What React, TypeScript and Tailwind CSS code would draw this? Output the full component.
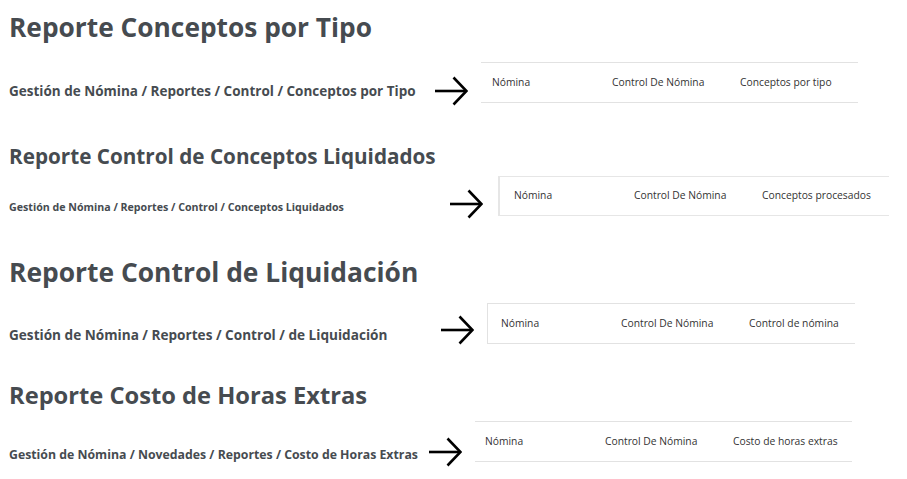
import React from "react";

const Arrow = () => (
  <svg width="34" height="30" viewBox="0 0 34 30" fill="none" stroke="#000" strokeWidth="2.6">
    <path d="M1 15 H32" />
    <path d="M19.5 1.5 L32.5 15 L19.5 28.5" />
  </svg>
);

const Crumbs = ({ last, pad }: { last: string; pad: string }) => (
  <div className={`flex h-full items-center text-[10.3px] text-[#333] whitespace-nowrap ${pad}`}>
    <span className="w-[120px]">Nómina</span>
    <span className="w-[128px]">Control De Nómina</span>
    <span>{last}</span>
  </div>
);

export default function App() {
  return (
    <div
      className="w-[907px] h-[479px] bg-white overflow-hidden pl-[9px] text-[#464b50]"
      style={{ fontFamily: "'Open Sans', sans-serif" }}
    >
      {/* Conceptos por tipo */}
      <h1 className="pt-[9px] text-[26.3px] leading-[36px] font-bold">Reporte Conceptos por Tipo</h1>
      <div className="flex items-start mt-[17px]">
        <div className="w-[425px] mt-[19px] text-[13.5px] leading-[20px] font-bold whitespace-nowrap">
          Gestión de Nómina / Reportes / Control / Conceptos por Tipo
        </div>
        <div className="mt-[14px] mr-[13px]"><Arrow /></div>
        <div className="w-[377px] h-[41px] border-y border-[#e2e2e2]">
          <Crumbs last="Conceptos por tipo" pad="pl-[11px]" />
        </div>
      </div>

      {/* Conceptos liquidados */}
      <h2 className="mt-[36px] text-[20.7px] leading-[28px] font-bold">Reporte Control de Conceptos Liquidados</h2>
      <div className="flex items-start mt-[6px]">
        <div className="w-[440px] mt-[22px] text-[10.65px] leading-[18px] font-bold whitespace-nowrap">
          Gestión de Nómina / Reportes / Control / Conceptos Liquidados
        </div>
        <div className="mt-[13px] mr-[15px]"><Arrow /></div>
        <div className="w-[391px] h-[40px] border-y border-l-[2px] border-[#e6e6e6]">
          <Crumbs last="Conceptos procesados" pad="pl-[14px]" />
        </div>
      </div>

      {/* Control de liquidación */}
      <h2 className="mt-[35px] text-[26.4px] leading-[36px] font-bold">Reporte Control de Liquidación</h2>
      <div className="flex items-start mt-[13px]">
        <div className="w-[431px] mt-[22px] text-[13.6px] leading-[20px] font-bold whitespace-nowrap">
          Gestión de Nómina / Reportes / Control / de Liquidación
        </div>
        <div className="mt-[12px] mr-[13px]"><Arrow /></div>
        <div className="w-[368px] h-[41px] border-y border-l border-[#e2e2e2]">
          <Crumbs last="Control de nómina" pad="pl-[13px]" />
        </div>
      </div>

      {/* Horas extras */}
      <h2 className="mt-[34px] text-[23.7px] leading-[32px] font-bold">Reporte Costo de Horas Extras</h2>
      <div className="flex items-start mt-[10px]">
        <div className="w-[419px] mt-[25px] text-[12.3px] leading-[18px] font-bold whitespace-nowrap">
          Gestión de Nómina / Novedades / Reportes / Costo de Horas Extras
        </div>
        <div className="mt-[16px] mr-[13px]"><Arrow /></div>
        <div className="w-[377px] h-[41px] border-y border-[#e2e2e2]">
          <Crumbs last="Costo de horas extras" pad="pl-[10px]" />
        </div>
      </div>
    </div>
  );
}
